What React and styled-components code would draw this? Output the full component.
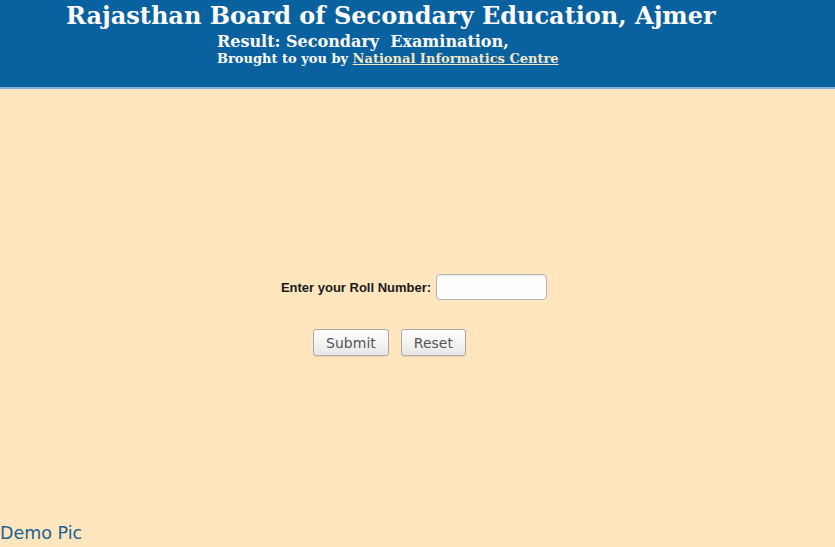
import React, { useState } from 'react';
import styled, { createGlobalStyle } from 'styled-components';

const GlobalStyle = createGlobalStyle`
  html, body {
    margin: 0;
    padding: 0;
    background: #ffe6bf;
    overflow: hidden;
  }
`;

const Page = styled.div`
  width: 835px;
  height: 547px;
  display: flex;
  flex-direction: column;
  background: #ffe6bf;
`;

const Header = styled.header`
  height: 89px;
  background: #0a619f;
  border-bottom: 2px solid #7fb2d6;
  box-sizing: border-box;
  padding-left: 66px;
  font-family: "DejaVu Serif", serif;
  font-weight: bold;
  color: #fff;
`;

const Title = styled.h1`
  margin: 0;
  font-size: 24px;
  line-height: 32px;
`;

const SubBlock = styled.div`
  padding-left: 151px;
`;

const Subtitle = styled.div`
  font-size: 16px;
  line-height: 19px;
`;

const Credit = styled.div`
  font-size: 13px;
  line-height: 16px;
`;

const CreditLink = styled.a`
  color: #f3e6c4;
  text-decoration: underline;
`;

const Main = styled.main`
  flex: 1;
  display: flex;
  flex-direction: column;
  align-items: center;
  padding-top: 185px;
`;

const Field = styled.label`
  display: flex;
  align-items: center;
  gap: 5px;
  margin-left: -7px;
  font-family: "Liberation Sans", Arial, sans-serif;
  font-size: 13px;
  font-weight: bold;
  color: #1a1a1a;
`;

const Input = styled.input`
  width: 111px;
  height: 26px;
  box-sizing: border-box;
  border: 1px solid #b5b5b5;
  border-radius: 4px;
  background: #fdfdfd;
  box-shadow: inset 0 1px 2px rgba(0, 0, 0, 0.08);
  outline: none;
`;

const Actions = styled.div`
  display: flex;
  gap: 12px;
  margin-top: 29px;
  margin-left: -56px;
`;

const Btn = styled.button`
  height: 27px;
  padding: 0 12px;
  border: 1px solid #a9a9a9;
  border-radius: 3px;
  background: linear-gradient(#ffffff, #e8e8e8);
  font-family: "DejaVu Sans", sans-serif;
  font-size: 14px;
  color: #555;
  box-shadow: 0 1px 1px rgba(0, 0, 0, 0.08);
`;

const Watermark = styled.div`
  padding-bottom: 4px;
  font-family: "DejaVu Sans", sans-serif;
  font-size: 17.5px;
  color: #1b5f93;
`;

export default function App() {
  const [roll, setRoll] = useState('');

  return (
    <>
      <GlobalStyle />
      <Page>
        <Header>
          <Title>Rajasthan Board of Secondary Education, Ajmer</Title>
          <SubBlock>
            <Subtitle>Result: Secondary&nbsp; Examination,</Subtitle>
            <Credit>
              Brought to you by <CreditLink href="#">National Informatics Centre</CreditLink>
            </Credit>
          </SubBlock>
        </Header>
        <Main>
          <Field>
            Enter your Roll Number:
            <Input value={roll} onChange={e => setRoll(e.target.value)} />
          </Field>
          <Actions>
            <Btn type="button">Submit</Btn>
            <Btn type="button" onClick={() => setRoll('')}>Reset</Btn>
          </Actions>
        </Main>
        <Watermark>Demo Pic</Watermark>
      </Page>
    </>
  );
}
